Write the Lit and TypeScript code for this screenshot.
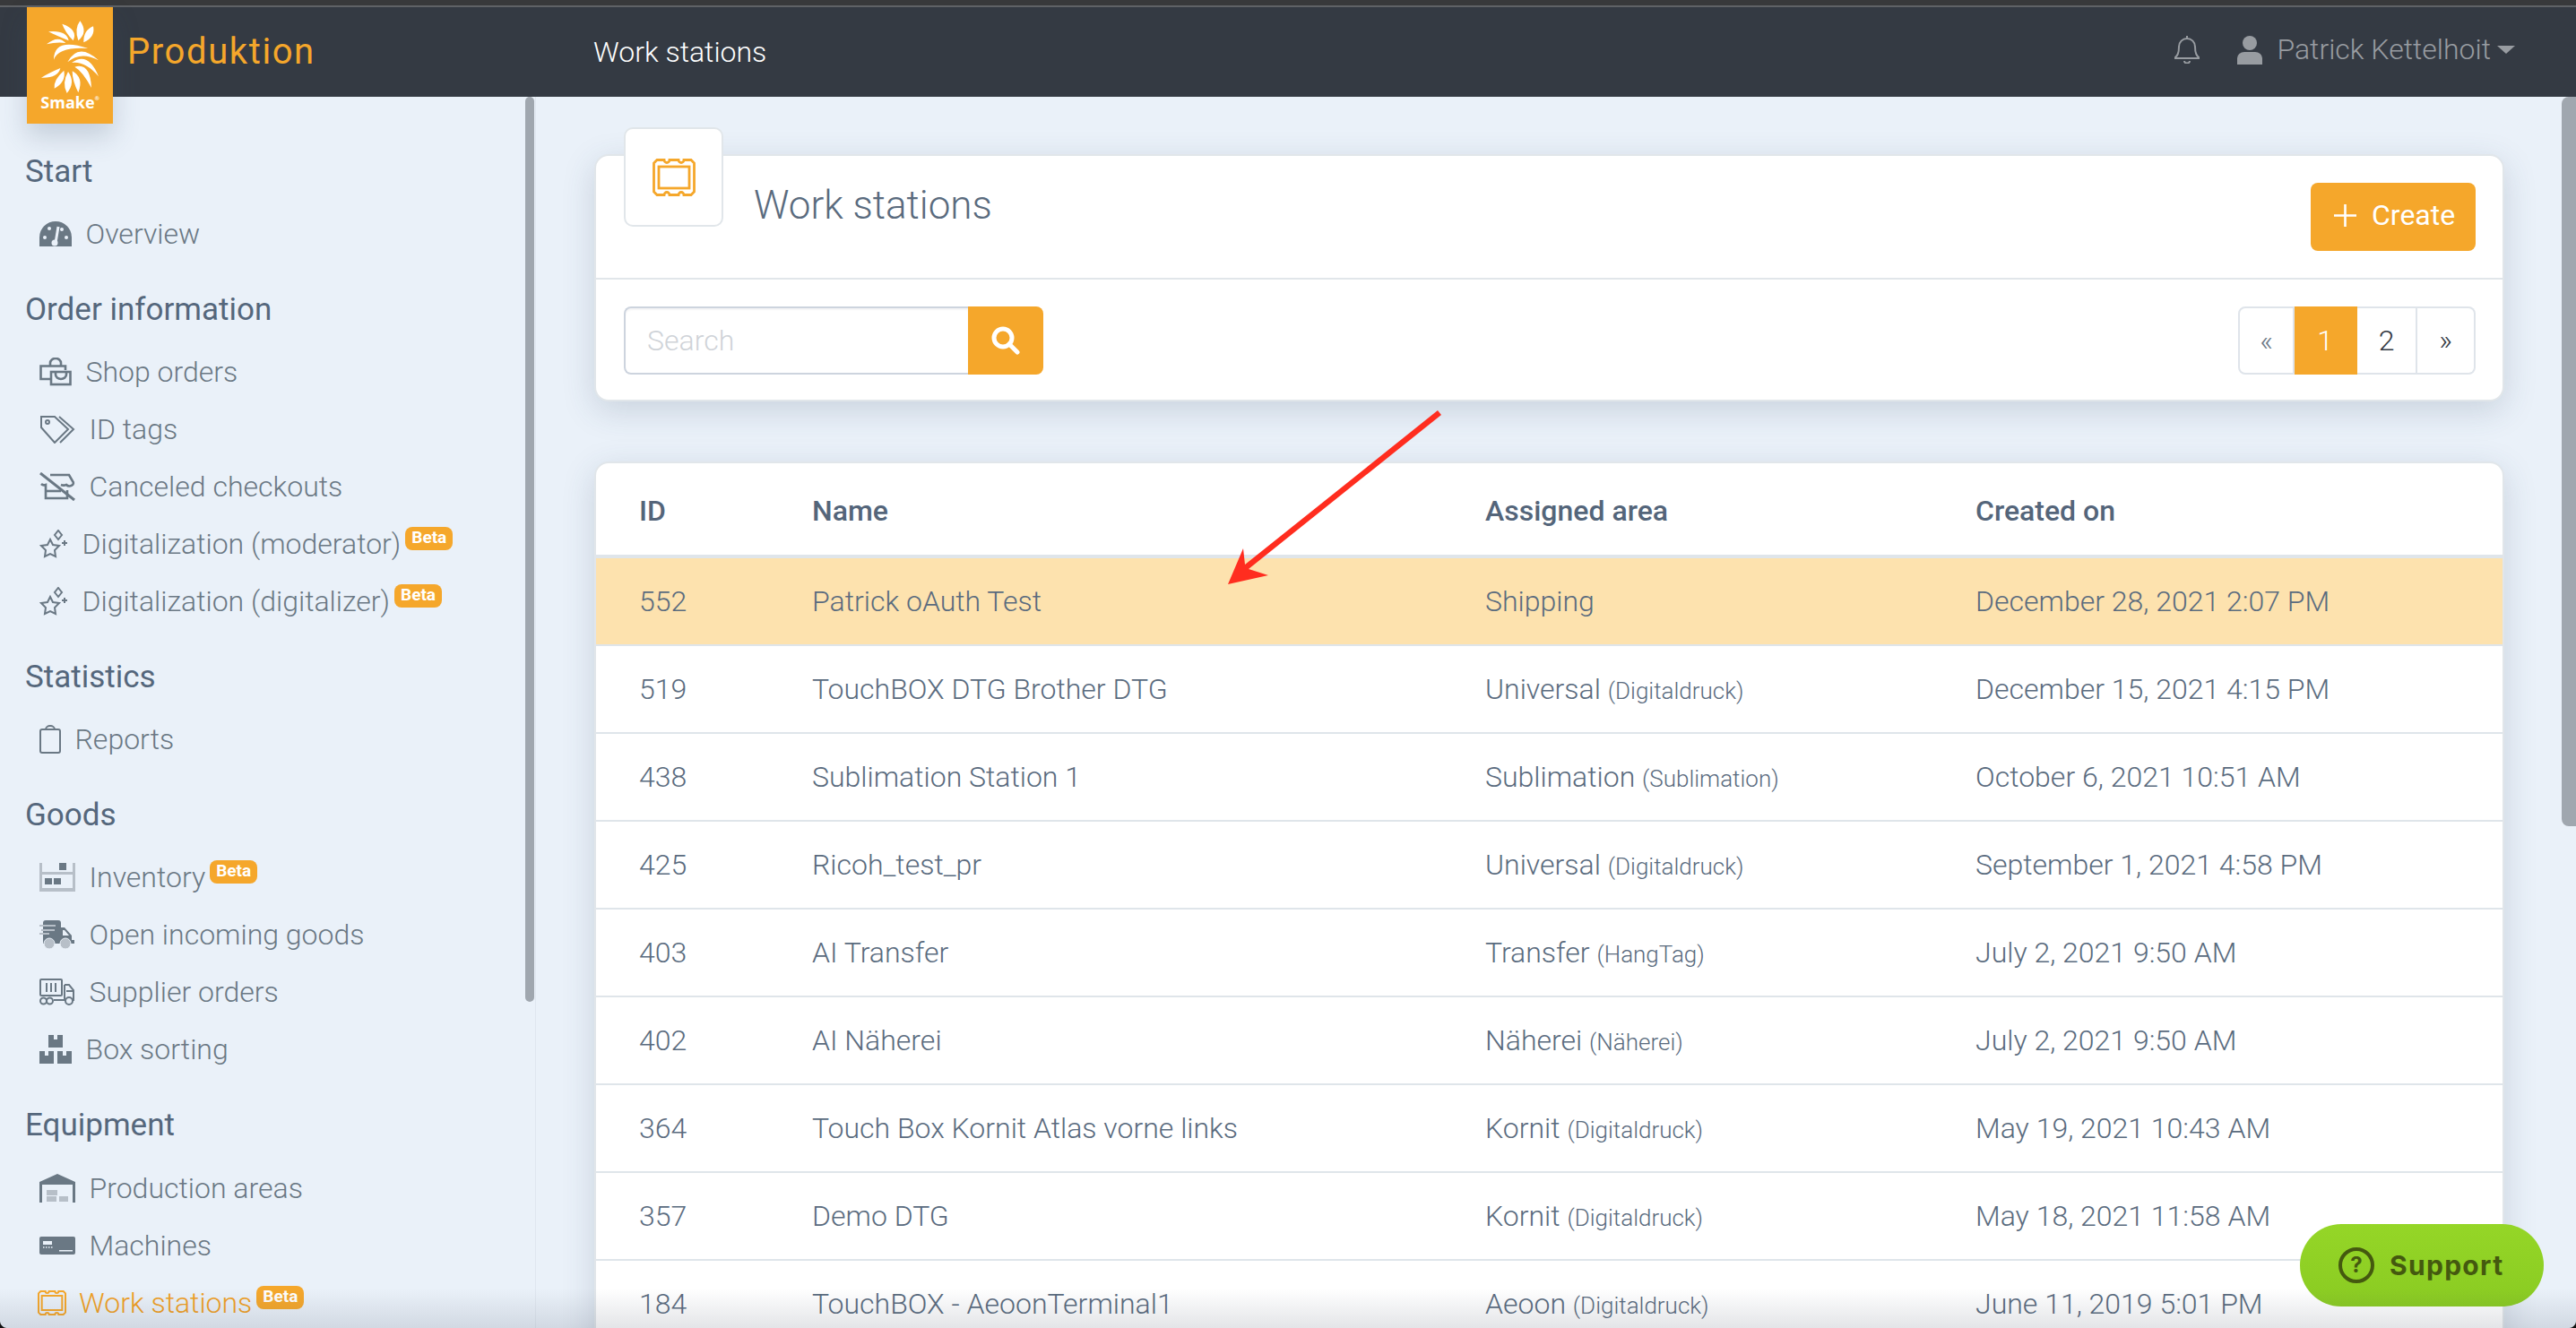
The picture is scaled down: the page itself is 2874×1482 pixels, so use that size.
import {css, html, LitElement, svg, nothing} from "lit";
import {customElement} from "lit/decorators.js";

interface NavItem {
  label: string;
  icon: unknown;
  beta?: boolean;
  active?: boolean;
}

interface NavSection {
  title: string;
  items: NavItem[];
}

interface Row {
  id: string;
  name: string;
  area: string;
  sub?: string;
  created: string;
  highlight?: boolean;
}

const BG = "#eaf1f9";
const DARK = "#6a7884";
const LIGHT = "#b7bfc8";

// width and height of an icon are the pixel box it takes in the nav row
const icon = (w: number, h: number, body: unknown) => html`
  <svg class="nav-icon" width=${w} height=${h} viewBox="0 0 ${w} ${h}">${body}</svg>
`;

const gauge = icon(36, 28, svg`
  <path d="M0 28V18a18 18 0 0 1 36 0v10z" fill=${DARK}/>
  <circle cx="6" cy="18" r="2" fill=${BG}/><circle cx="30" cy="18" r="2" fill=${BG}/>
  <circle cx="11" cy="8" r="2" fill=${BG}/><circle cx="25" cy="9" r="2" fill=${BG}/>
  <path d="M18 24L21 6" stroke=${BG} stroke-width="3"/>
  <circle cx="17" cy="24" r="3.5" fill=${BG}/>
`);

const shopBag = icon(36, 32, svg`
  <g fill="none" stroke=${DARK} stroke-width="2.6">
    <path d="M12 9V6a6 5 0 0 1 12 0v3"/>
    <path d="M13 24H1.5V9.5H29V14"/>
    <rect x="13" y="16" width="21.5" height="14"/>
    <path d="M18 17v2a6 5 0 0 0 12 0v-2"/>
  </g>
`);

const tags = icon(40, 32, svg`
  <g fill="none" stroke=${DARK} stroke-width="2">
    <path d="M2 2H17L32 16 17 31 2 14z"/>
    <circle cx="9" cy="8" r="2"/>
    <path d="M22 2l16 14-15 15"/>
  </g>
`);

const canceled = icon(40, 32, svg`
  <g fill="none" stroke=${DARK} stroke-width="2.6">
    <path d="M12 3H33L37 10a4 3 0 0 1-7 4 5 3 0 0 1-6 0"/>
    <path d="M2 13a4 3 0 0 0 5 1V29H31V20"/>
    <path d="M7 21H24"/>
    <path d="M1 1L39 31" stroke-width="3"/>
  </g>
`);

const sparkle = icon(32, 32, svg`
  <g fill="none" stroke=${DARK} stroke-width="2">
    <path d="M12 11l3 6 7 1-5 5 1 7-6-3-6 3 1-7-5-5 7-1z"/>
    <path d="M21 1l4 5-4 5-4-5z"/>
    <path d="M28 12v6M25 15h6"/>
  </g>
`);

const clipboard = icon(24, 32, svg`
  <g fill="none" stroke=${DARK} stroke-width="2">
    <rect x="1" y="5" width="22" height="26" rx="2"/>
    <path d="M7 5a5 4 0 0 1 10 0"/>
  </g>
`);

const shelf = icon(40, 32, svg`
  <path d="M0 0h3v32H0zM37 0h3v32h-3zM3 10h34v3H3zM3 28h34v4H3z" fill=${LIGHT}/>
  <path d="M22 0h8v8h-8zM6 17h8v7H6zM16 17h8v7h-8z" fill=${DARK}/>
`);

const truck = icon(40, 32, svg`
  <path d="M4 3a3 3 0 0 1 3-3H21a3 3 0 0 1 3 3V8h4l8 9v5h3v4H4z" fill=${DARK}/>
  <path d="M26 11h2l5 6h-7z" fill=${BG}/>
  <path d="M0 6h18M2 11h15M0 15h11" stroke=${LIGHT} stroke-width="2"/>
  <circle cx="11" cy="26" r="6" fill=${LIGHT} stroke=${BG} stroke-width="1"/>
  <circle cx="29" cy="26" r="6" fill=${LIGHT} stroke=${BG} stroke-width="1"/>
`);

const container = icon(40, 30, svg`
  <g fill="none" stroke=${DARK} stroke-width="2">
    <rect x="1" y="1" width="24" height="18" rx="1"/>
    <path d="M8 5v10M13 5v10M18 5v10"/>
    <path d="M28 7h5l5 6v11h-2M30 24H16M28 7v17M30 14h8"/>
    <circle cx="4.5" cy="25" r="3.5"/><circle cx="11.5" cy="25" r="3.5"/>
    <circle cx="33" cy="25" r="4"/>
  </g>
`);

const boxes = icon(36, 32, svg`
  <path d="M10 0h16v14H10zM0 18h16v14H0zM20 18h16v14H20z" fill=${DARK}/>
  <path d="M16 0h4v5h-4zM6 18h4v5H6zM26 18h4v5h-4z" fill=${BG}/>
`);

const warehouse = icon(40, 32, svg`
  <path d="M0 32V9L20 0 40 9V32H37V12H3V32z" fill=${DARK}/>
  <path d="M8 18h12v6H8zM8 25h11v6H8zM22 25h10v6H22z" fill=${LIGHT}/>
`);

const machine = icon(40, 20, svg`
  <rect width="40" height="20" rx="2" fill=${DARK}/>
  <path d="M4 5h10v4H4zM22 15h15v1.5H22z" fill=${BG}/>
  <path d="M4 12h11" stroke=${BG} stroke-width="1.5" stroke-dasharray="1.5 1.5"/>
`);

const stationPath = svg`
  <path d="M5 1.5h8a3 3 0 0 0 6 0h10a3 3 0 0 0 6 0h8L46.5 5V37L43 40.5h-8a3 3 0 0 0-6 0H19a3 3 0 0 0-6 0H5L1.5 37V5z"/>
  <rect x="7" y="9" width="34" height="24"/>
`;

const navSections: NavSection[] = [
  {title: "Start", items: [{label: "Overview", icon: gauge}]},
  {
    title: "Order information",
    items: [
      {label: "Shop orders", icon: shopBag},
      {label: "ID tags", icon: tags},
      {label: "Canceled checkouts", icon: canceled},
      {label: "Digitalization (moderator)", icon: sparkle, beta: true},
      {label: "Digitalization (digitalizer)", icon: sparkle, beta: true},
    ],
  },
  {title: "Statistics", items: [{label: "Reports", icon: clipboard}]},
  {
    title: "Goods",
    items: [
      {label: "Inventory", icon: shelf, beta: true},
      {label: "Open incoming goods", icon: truck},
      {label: "Supplier orders", icon: container},
      {label: "Box sorting", icon: boxes},
    ],
  },
  {
    title: "Equipment",
    items: [
      {label: "Production areas", icon: warehouse},
      {label: "Machines", icon: machine},
      {
        label: "Work stations",
        active: true,
        beta: true,
        icon: html`<svg class="nav-icon station" width="32" height="28" viewBox="0 0 48 42">${stationPath}</svg>`,
      },
    ],
  },
];

const rows: Row[] = [
  {id: "552", name: "Patrick oAuth Test", area: "Shipping", created: "December 28, 2021 2:07 PM", highlight: true},
  {id: "519", name: "TouchBOX DTG Brother DTG", area: "Universal", sub: "(Digitaldruck)", created: "December 15, 2021 4:15 PM"},
  {id: "438", name: "Sublimation Station 1", area: "Sublimation", sub: "(Sublimation)", created: "October 6, 2021 10:51 AM"},
  {id: "425", name: "Ricoh_test_pr", area: "Universal", sub: "(Digitaldruck)", created: "September 1, 2021 4:58 PM"},
  {id: "403", name: "AI Transfer", area: "Transfer", sub: "(HangTag)", created: "July 2, 2021 9:50 AM"},
  {id: "402", name: "AI Näherei", area: "Näherei", sub: "(Näherei)", created: "July 2, 2021 9:50 AM"},
  {id: "364", name: "Touch Box Kornit Atlas vorne links", area: "Kornit", sub: "(Digitaldruck)", created: "May 19, 2021 10:43 AM"},
  {id: "357", name: "Demo DTG", area: "Kornit", sub: "(Digitaldruck)", created: "May 18, 2021 11:58 AM"},
  {id: "184", name: "TouchBOX - AeoonTerminal1", area: "Aeoon", sub: "(Digitaldruck)", created: "June 11, 2019 5:01 PM"},
];

// each petal: start, control, tip, control (in the logo's own 288 x 396 grid)
const petals: number[][] = [
  [190, 118, 230, 100, 222, 64, 188, 78],
  [172, 112, 206, 84, 178, 46, 158, 72],
  [155, 112, 172, 74, 118, 56, 128, 84],
  [140, 112, 132, 76, 72, 82, 100, 96],
  [130, 120, 104, 92, 66, 124, 100, 116],
  [205, 138, 90, 100, 90, 176, 105, 132],
  [136, 184, 172, 116, 240, 178, 180, 146],
  [150, 186, 205, 146, 240, 232, 196, 180],
  [160, 200, 212, 184, 216, 270, 186, 214],
  [152, 214, 192, 236, 172, 286, 152, 246],
  [138, 216, 164, 252, 134, 288, 116, 254],
  [124, 212, 132, 250, 92, 272, 88, 244],
  [112, 204, 104, 238, 48, 236, 74, 220],
];

const petalPath = (p: number[]) =>
  `M${p[0]} ${p[1]}Q${p[2]} ${p[3]} ${p[4]} ${p[5]}Q${p[6]} ${p[7]} ${p[0]} ${p[1]}z`;

@customElement("app-root")
export class AppRoot extends LitElement {
  static styles = css`
    :host {
      display: flex;
      flex-direction: column;
      position: relative;
      width: 2874px;
      height: 1482px;
      overflow: hidden;
      background: #eaf1f9;
      font-family: Roboto, "Liberation Sans", sans-serif;
      font-weight: 300;
      font-size: 32px;
      color: #5a6b7e;
    }

    .topbar {
      flex: none;
      display: flex;
      align-items: center;
      height: 100px;
      box-sizing: border-box;
      background: #343a43;
      position: relative;
      z-index: 3;
    }

    .chrome {
      flex: none;
      height: 8px;
      box-sizing: border-box;
      background: #38393b;
      border-bottom: 2px solid #5f6266;
    }

    .logo {
      align-self: flex-start;
      flex: none;
      display: flex;
      flex-direction: column;
      align-items: center;
      width: 96px;
      height: 130px;
      margin-left: 30px;
      background: #f5a72b;
      box-shadow: 0 14px 28px rgba(60, 80, 110, 0.22);
    }

    .logo svg {
      display: block;
    }

    .logo-text {
      margin-top: -38px;
      font-family: "Open Sans", sans-serif;
      font-weight: 700;
      font-size: 18px;
      line-height: 24px;
      color: #fff;
    }

    .logo-text sup {
      font-size: 6px;
      vertical-align: 9px;
      line-height: 0;
    }

    .app-title {
      width: 520px;
      margin-left: 16px;
      color: #f5a72b;
      font-size: 40px;
      font-weight: 400;
      letter-spacing: 1.6px;
      margin-top: -2px;
    }

    .crumb {
      color: #fff;
      flex: 1;
    }

    .bell {
      margin-right: 42px;
      margin-top: -6px;
    }

    .user-icon {
      margin-right: 16px;
      margin-top: -4px;
    }

    .user {
      color: #989ca1;
      margin-right: 7px;
      margin-top: -6px;
    }

    .caret {
      width: 0;
      height: 0;
      border-left: 10px solid transparent;
      border-right: 10px solid transparent;
      border-top: 9px solid #989ca1;
      margin-right: 68px;
      margin-top: -6px;
    }

    .body {
      flex: 1;
      display: flex;
      min-height: 0;
    }

    .sidebar {
      flex: none;
      width: 598px;
      box-sizing: border-box;
      padding: 64px 0 0 28px;
      position: relative;
      border-right: 1px solid #dfe6ef;
    }

    .thumb {
      position: absolute;
      top: 0;
      right: 1px;
      width: 10px;
      height: 1010px;
      border-radius: 5px;
      background: #a0a7af;
    }

    .section {
      margin-bottom: 33px;
    }

    .section h3 {
      margin: 0 0 17px;
      height: 40px;
      line-height: 40px;
      font-size: 35px;
      font-weight: 400;
      color: #55677c;
    }

    .section:last-child h3 {
      margin-bottom: 18px;
    }

    .item {
      display: flex;
      align-items: center;
      height: 64px;
      padding-left: 16px;
      color: #6a7884;
      white-space: nowrap;
    }

    .nav-icon {
      flex: none;
      margin-right: 15.5px;
    }

    .station {
      fill: none;
      stroke: #f5a72b;
      stroke-width: 3;
      margin-left: -2px;
      margin-right: 14px;
    }

    .item.active {
      color: #f09f24;
    }

    .beta {
      display: inline-block;
      margin: -12px 0 0 5px;
      padding: 0 7px;
      height: 26px;
      line-height: 24px;
      border-radius: 8px;
      background: #f5a72b;
      color: #fff;
      font-size: 19px;
      font-weight: 700;
    }

    .main {
      flex: 1;
      min-width: 0;
      box-sizing: border-box;
      padding: 64px 80px 0 65px;
      position: relative;
    }

    .main-thumb {
      position: absolute;
      top: 0;
      right: 0;
      width: 16px;
      height: 814px;
      border-radius: 8px 0 0 8px;
      background: #a0a7af;
    }

    .card {
      background: #fff;
      border: 2px solid #e1e6ea;
      border-radius: 16px;
      box-shadow: 0 10px 36px rgba(50, 70, 100, 0.18);
      box-sizing: border-box;
    }

    .head-card {
      height: 276px;
      margin-bottom: 67px;
    }

    .head-top {
      display: flex;
      height: 136px;
      padding: 0 30px 0 31px;
      border-bottom: 2px solid #e1e6ea;
    }

    .badge {
      flex: none;
      display: flex;
      align-items: flex-start;
      justify-content: center;
      width: 111px;
      height: 111px;
      box-sizing: border-box;
      margin-top: -32px;
      padding-top: 33px;
      background: #fff;
      border: 2px solid #e1e6ea;
      border-radius: 10px;
      fill: none;
      stroke: #f5a72b;
      stroke-width: 2.8;
    }

    .head-top h1 {
      flex: 1;
      margin: 27px 0 0 34px;
      font-size: 44px;
      line-height: 56px;
      font-weight: 300;
      color: #5a6b7e;
    }

    .create {
      flex: none;
      display: flex;
      align-items: center;
      gap: 17px;
      height: 76px;
      margin-top: 30px;
      padding: 0 0 4px 26px;
      box-sizing: border-box;
      width: 184px;
      border-radius: 8px;
      background: #f5a72b;
      color: #fff;
      font-weight: 400;
    }

    .head-bottom {
      display: flex;
      align-items: center;
      justify-content: space-between;
      padding: 30px 30px 0 31px;
    }

    .search {
      display: flex;
      height: 76px;
    }

    .search-input {
      width: 384px;
      box-sizing: border-box;
      padding-left: 24px;
      line-height: 72px;
      color: #cfd3d8;
      border: 2px solid #cdd4de;
      border-right: 0;
      border-radius: 8px 0 0 8px;
      box-shadow: inset 0 2px 2px rgba(60, 70, 90, 0.06);
    }

    .search-btn {
      display: flex;
      align-items: center;
      justify-content: center;
      width: 84px;
      background: #f5a72b;
      border-radius: 0 8px 8px 0;
    }

    .pager {
      display: flex;
      height: 76px;
      line-height: 72px;
      text-align: center;
    }

    .pager span {
      box-sizing: border-box;
      border: 2px solid #dfe4ea;
      border-left: 0;
      color: #343a43;
    }

    .pager .prev {
      width: 63px;
      border-left: 2px solid #dfe4ea;
      border-radius: 8px 0 0 8px;
      color: #6b7785;
    }

    .pager .current {
      width: 70px;
      background: #f5a72b;
      border-color: #f5a72b;
      color: #fff;
    }

    .pager .page {
      width: 67px;
    }

    .pager .next {
      width: 65px;
      border-radius: 0 8px 8px 0;
    }

    table {
      width: 100%;
      border-collapse: collapse;
      table-layout: fixed;
      border-radius: 16px;
    }

    th {
      height: 99px;
      padding: 3px 0 0 48px;
      text-align: left;
      font-size: 32px;
      font-weight: 500;
      color: #54657a;
      border-bottom: 4px solid #dfe5ea;
    }

    td {
      height: 96px;
      padding: 0 0 0 48px;
      color: #5a6b7e;
      border-bottom: 2px solid #dfe5ea;
      white-space: nowrap;
    }

    td small {
      font-size: 26px;
    }

    tr.highlight td {
      background: #fde2ae;
    }

    .arrow {
      position: absolute;
      left: 0;
      top: 0;
      z-index: 4;
      pointer-events: none;
    }

    .support {
      position: absolute;
      left: 2566px;
      top: 1366px;
      width: 272px;
      height: 92px;
      box-sizing: border-box;
      padding-left: 43px;
      display: flex;
      align-items: center;
      gap: 17px;
      border-radius: 46px;
      background: linear-gradient(#95d627, #8acb22);
      color: #44590f;
      font-family: Inter, "Liberation Sans", sans-serif;
      font-size: 30px;
      font-weight: 700;
      letter-spacing: 1.3px;
      z-index: 5;
    }

    .help {
      flex: none;
      width: 40px;
      height: 40px;
      box-sizing: border-box;
      border: 4px solid #44590f;
      border-radius: 50%;
      text-align: center;
      font-size: 24px;
      line-height: 32px;
      letter-spacing: 0;
    }

    .fade {
      position: absolute;
      left: 0;
      right: 0;
      bottom: 0;
      height: 44px;
      background: linear-gradient(rgba(60, 70, 90, 0), rgba(60, 70, 90, 0.14));
      z-index: 6;
      pointer-events: none;
    }

    .corner {
      position: absolute;
      bottom: 0;
      width: 8px;
      height: 8px;
      z-index: 7;
    }

    .corner.left {
      left: 0;
      background: radial-gradient(circle at 8px 0, transparent 7.5px, #111 8.5px);
    }

    .corner.right {
      right: 0;
      background: radial-gradient(circle at 0 0, transparent 7.5px, #111 8.5px);
    }
  `;

  private renderItem(item: NavItem) {
    return html`
      <div class="item ${item.active ? "active" : ""}">
        ${item.icon}<span>${item.label}</span>
        ${item.beta ? html`<span class="beta">Beta</span>` : nothing}
      </div>
    `;
  }

  private renderLogo() {
    return html`
      <div class="logo">
        <svg width="96" height="132" viewBox="0 0 288 396" fill="#fff">
          ${petals.map((p) => svg`<path d=${petalPath(p)}/>`)}
        </svg>
        <div class="logo-text">Smake<sup>®</sup></div>
      </div>
    `;
  }

  render() {
    return html`
      <div class="chrome"></div>
      <header class="topbar">
        ${this.renderLogo()}
        <div class="app-title">Produktion</div>
        <div class="crumb">Work stations</div>
        <svg class="bell" width="28" height="32" viewBox="0 0 28 32" fill="none" stroke="#989ca1" stroke-width="2">
          <path d="M14 4a9 9 0 0 0-9 9c0 8-2 10-4 12v1h26v-1c-2-2-4-4-4-12a9 9 0 0 0-9-9zM14 4V1"/>
          <path d="M11 29a3 2.5 0 0 0 6 0"/>
        </svg>
        <svg class="user-icon" width="28" height="32" viewBox="0 0 28 32" fill="#989ca1">
          <circle cx="14" cy="8" r="8"/>
          <path d="M0 32V25a8 7 0 0 1 8-7h12a8 7 0 0 1 8 7v7z"/>
        </svg>
        <div class="user">Patrick Kettelhoit</div>
        <div class="caret"></div>
      </header>
      <div class="body">
        <nav class="sidebar">
          <div class="thumb"></div>
          ${navSections.map(
            (s) => html`
              <div class="section">
                <h3>${s.title}</h3>
                ${s.items.map((i) => this.renderItem(i))}
              </div>
            `
          )}
        </nav>
        <main class="main">
          <div class="main-thumb"></div>
          <section class="card head-card">
            <div class="head-top">
              <div class="badge">
                <svg width="48" height="42" viewBox="0 0 48 42">${stationPath}</svg>
              </div>
              <h1>Work stations</h1>
              <div class="create">
                <svg width="25" height="25" viewBox="0 0 25 25" stroke="#fff" stroke-width="2.6">
                  <path d="M12.5 0v25M0 12.5h25"/>
                </svg>
                Create
              </div>
            </div>
            <div class="head-bottom">
              <div class="search">
                <div class="search-input">Search</div>
                <div class="search-btn">
                  <svg width="32" height="32" viewBox="0 0 32 32" fill="none" stroke="#fff" stroke-width="5">
                    <circle cx="13" cy="13" r="10"/>
                    <path d="M20 20l9 9" stroke-linecap="round"/>
                  </svg>
                </div>
              </div>
              <div class="pager">
                <span class="prev">«</span>
                <span class="current">1</span>
                <span class="page">2</span>
                <span class="next">»</span>
              </div>
            </div>
          </section>
          <section class="card">
            <table>
              <colgroup>
                <col style="width: 193px" />
                <col style="width: 751px" />
                <col style="width: 547px" />
                <col />
              </colgroup>
              <thead>
                <tr><th>ID</th><th>Name</th><th>Assigned area</th><th>Created on</th></tr>
              </thead>
              <tbody>
                ${rows.map(
                  (r) => html`
                    <tr class=${r.highlight ? "highlight" : ""}>
                      <td>${r.id}</td>
                      <td>${r.name}</td>
                      <td>${r.area} ${r.sub ? html`<small>${r.sub}</small>` : nothing}</td>
                      <td>${r.created}</td>
                    </tr>
                  `
                )}
              </tbody>
            </table>
          </section>
        </main>
      </div>
      <svg class="arrow" width="2874" height="1482" viewBox="0 0 2874 1482">
        <path d="M1604 458L1608 463 1393 635 1415 642 1370 652 1387 612 1389 630z" fill="#ff2d1f"/>
      </svg>
      <div class="support"><span class="help">?</span>Support</div>
      <div class="fade"></div>
      <div class="corner left"></div>
      <div class="corner right"></div>
    `;
  }
}

declare global {
  interface HTMLElementTagNameMap {
    "app-root": AppRoot;
  }
}
